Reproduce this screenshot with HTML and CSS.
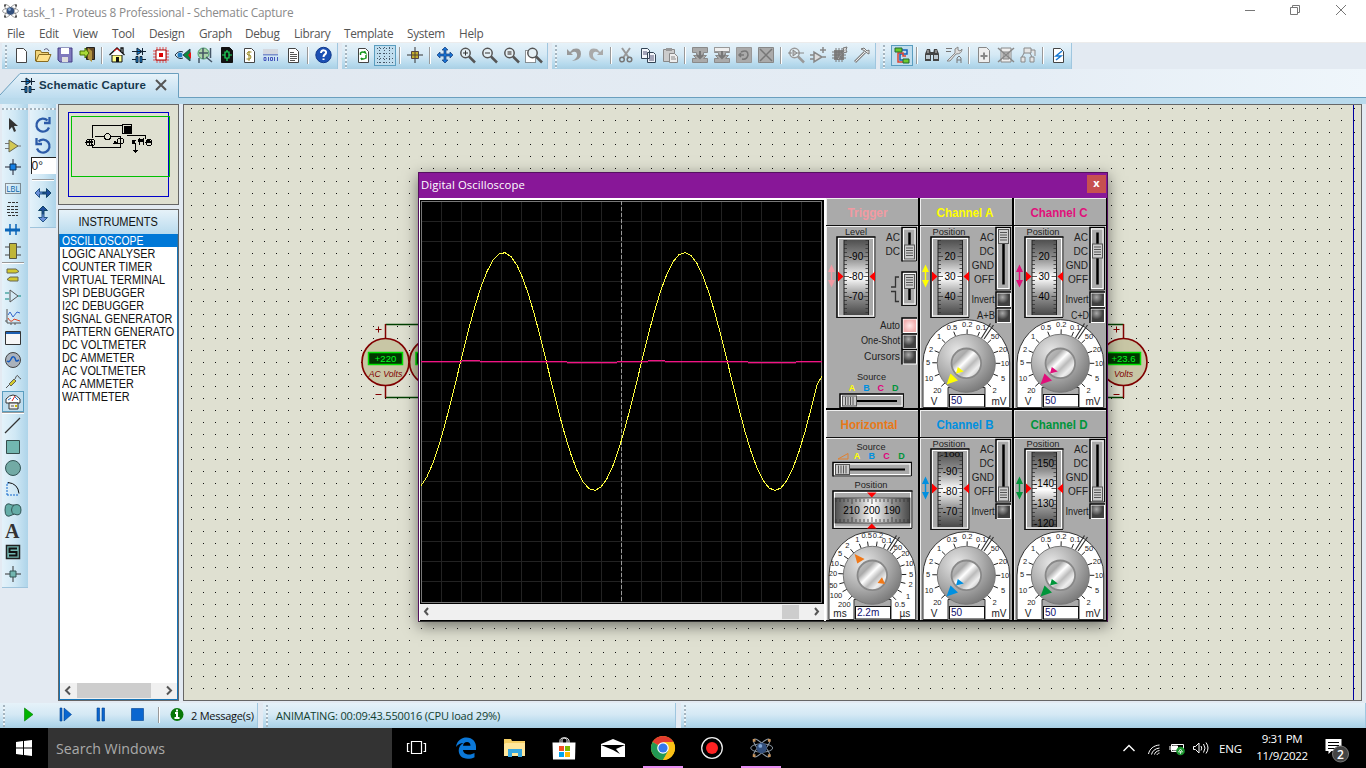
FILE: index.html
```html
<!DOCTYPE html>
<html lang="en">
<head>
<meta charset="utf-8">
<title>task_1 - Proteus 8 Professional - Schematic Capture</title>
<link rel="stylesheet" href="styles.css">
</head>
<body>
<div class="app">
  <header class="titlebar">
    <span class="ico" data-icon="atom"></span>
    <span class="caption">task_1 - Proteus 8 Professional - Schematic Capture</span>
    <svg class="winbtns" width="124" height="22" viewBox="0 0 124 22"><g fill="none" stroke="#777"><path d="M10 10.500h10M55.500 7.500h7v7h-7zM57.500 7v-1.500h7v7h-2M101 5l10 10M111 5l-10 10"/></g></svg>
  </header>
  <nav class="menu"><span>File</span><span>Edit</span><span>View</span><span>Tool</span><span>Design</span><span>Graph</span><span>Debug</span><span>Library</span><span>Template</span><span>System</span><span>Help</span></nav>
  <div class="toolbars">
    <div class="bar" data-icons="new open save exit | home parts chip eye zoomchip pcb bill code doc | help"></div>
    <div class="bar" data-icons="refresh *grid | origin | pan zoomin zoomout zoomall zoomarea"></div>
    <div class="bar" data-icons="undo redo | cut copy paste | blkcopy blkmove blkrot blkdel | pick makedev package hammer"></div>
    <div class="bar" data-icons="*wires | find props | addsheet delsheet tree | erc"></div>
  </div>
  <div class="tabs">
    <svg class="tabshape" width="180" height="25" viewBox="0 0 180 25"><defs><linearGradient id="tabg" x2="0" y2="1"><stop stop-color="#e8f3fa"/><stop offset="1" stop-color="#bcdcef"/></linearGradient></defs><path d="M0 22L20 .5h158.500V25H0z" fill="url(#tabg)"/><path d="M0 22L20 .5h158.500V24.500" fill="none" stroke="#6a9fbe"/></svg>
    <div class="tab"><span class="ico" data-icon="parts"></span><b>Schematic Capture</b><svg width="12" height="12"><path d="M1 1l10 10M11 1L1 11" stroke="#555" stroke-width="2"/></svg></div>
  </div>
  <main class="work">
    <aside class="tools"><div class="vbar" data-icons="arrow gate junction label script bus chipy | term pin graph window wave probe *meter | line square circle arc path text symbol marker"></div></aside>
    <aside class="rot"><div class="vbar short"><span class="ico" data-icon="cw"></span><span class="ico" data-icon="ccw"></span><span class="angle">0°</span><hr><span class="ico" data-icon="hflip"></span><span class="ico" data-icon="vflip"></span></div></aside>
    <section class="side">
      <div class="preview"><svg width="119" height="99" viewBox="59 105 119 99" shape-rendering="crispEdges"><path d="M68.500 112.500h100v84h-100z" fill="none" stroke="#0000c8"/><path d="M71.500 116.500h98v60h-98z" fill="none" stroke="#00c000"/><g fill="none" stroke="#000"><path d="M92.500 138v-12.500h30M92.500 144v3.500h28v-12M95 136.500h10M111 136.500h9M127 135.500h18v3M132 140.500h4M146 140.500h4M135.500 143v7"/><circle cx="89" cy="142.500" r="3"/><circle cx="92" cy="142.500" r="3"/><circle cx="107.500" cy="136.500" r="3"/><circle cx="120.500" cy="141" r="3"/><circle cx="149" cy="142.500" r="3"/><path d="M122.500 124.500h9v9h-9zM139.500 138v7M143.500 138v7"/></g><path d="M124 126h7v7h-7zM86 141h7v2h-7zM115 140l-2 4h5zM132 141h3v3h-3zM138 139h6v3h-6zM133 150h5l-2.500 3zM146 141h5v2h-5z"/></svg></div>
      <div class="instr"><div class="ihead"><span>INSTRUMENTS</span></div>
        <ul><li class="sel"><span>OSCILLOSCOPE</span></li><li><span>LOGIC ANALYSER</span></li><li><span>COUNTER TIMER</span></li><li><span>VIRTUAL TERMINAL</span></li><li><span>SPI DEBUGGER</span></li><li><span>I2C DEBUGGER</span></li><li><span>SIGNAL GENERATOR</span></li><li><span>PATTERN GENERATO</span></li><li><span>DC VOLTMETER</span></li><li><span>DC AMMETER</span></li><li><span>AC VOLTMETER</span></li><li><span>AC AMMETER</span></li><li><span>WATTMETER</span></li></ul>
        <div class="hscroll"><svg width="16" height="15"><path d="M10 3.500L6 7.500l4 4" class="chev"/></svg><i></i><svg width="16" height="15"><path d="M6 3.500l4 4-4 4" class="chev"/></svg></div>
      </div>
    </section>
    <section class="sheet"><svg id="sheet" width="1178" height="595" viewBox="184 105 1178 595"></svg>
      <div class="scope">
        <div class="scopebar"><span>Digital Oscilloscope</span><button>x</button></div>
        <div class="scopebody">
          <div class="display"><svg id="trace" width="403" height="404" viewBox="420 200 403 404"></svg>
            <div class="dscroll"><svg width="14" height="15"><path d="M8 4L5 7.500 8 11" class="chev"/></svg><i></i><svg width="14" height="15"><path d="M5 4l3 3.500L5 11" class="chev"/></svg></div></div>
          <div class="panels" id="panels"></div>
        </div>
      </div>
    </section>
  </main>
  <footer class="status">
    <div class="sbar s1"><svg width="170" height="24" viewBox="12 703 170 24"><path d="M24.500 708v13l8.500-6.500z" fill="#00b400" stroke="#007b00" stroke-width=".6"/><g fill="#0a66d0" stroke="#003f8f" stroke-width=".6"><path d="M60 708h2v13h-2zM64 708v13l7.500-6.500zM97 708h2.500v13H97zM102 708h2.500v13H102zM131.500 708.500h12v12h-12z"/></g><path d="M158.500 707v16" stroke="#999"/><path d="M159.500 707v16" stroke="#fff"/><circle cx="177" cy="714.500" r="6.500" fill="#087808"/><path d="M177 709.500v2M175 713h2v5M174.500 718h5" stroke="#fff" stroke-width="2" fill="none"/></svg><span class="msg">2 Message(s)</span></div>
    <div class="sbar s2"><span class="anim">ANIMATING: 00:09:43.550016 (CPU load 29%)</span></div>
    <div class="sbar s3"></div>
  </footer>
  <footer class="taskbar">
    <div class="start"><svg width="16" height="16"><path d="M0 2l7-1v6.500H0zM8 .9L16 0v7.500H8zM0 8.500h7V15l-7-1zM8 8.500h8V16l-8-1z" fill="#fff"/></svg></div>
    <div class="search">Search Windows</div>
    <div class="tb"><svg width="22" height="16"><path d="M5.500 1.500h10v12h-10zM3.500 3.500h-2v8h2M17.500 3.500h2v8h-2" fill="none" stroke="#fff" stroke-width="1.200"/></svg></div>
    <div class="tb"><svg width="22" height="22"><path d="M1 10C2 3 7 .5 11.500.5c6 0 9.500 4.500 9.500 9V13H8c.2 3 3 4.500 6 4.500 2.200 0 4-.6 5.500-1.500v4.300c-2 1-4.200 1.500-6.800 1.500-5.500 0-9-3.300-9-8.200 0-3.200 1.800-6 5-7.500C5.500 6.300 3 7.500 1 10zM8 8.800h7.500C15.500 6.500 14.200 5 12 5 9.700 5 8.300 6.600 8 8.800z" fill="#0b78d8"/></svg></div>
    <div class="tb"><svg width="22" height="20"><path d="M0 1h7l1 2h13v15H0z" fill="#f5cf65"/><path d="M2 5h19v13H0V6z" fill="#ffe79b"/><path d="M4 11h14v8h-4v-4H8v4H4z" fill="#36a7e0"/></svg></div>
    <div class="tb"><svg width="24" height="24"><path d="M8 7V4.500C8 1 15 1 15 4.500V7M10 7V4c0-3 7-3 7 1v2" fill="none" stroke="#fff"/><path d="M.5 6.500h23l-.5 17H1z" fill="#fff"/><path fill="#f25022" d="M7 10h5v5H7z"/><path fill="#7fba00" d="M13 10h5v5h-5z"/><path fill="#00a4ef" d="M7 16h5v5H7z"/><path fill="#ffb900" d="M13 16h5v5h-5z"/></svg></div>
    <div class="tb"><svg width="24" height="20"><path d="M0 6L12 1l12 5v13H0z" fill="#fff"/><path d="M0 7h24l-9 4 4 5-7-4z"/></svg></div>
    <div class="tb on"><svg width="24" height="24"><circle cx="12" cy="12" r="12" fill="#fbc116"/><path d="M12 12L1.600 6A12 12 0 0 1 22.400 6z" fill="#e33b2e"/><path d="M12 12L1.600 6A12 12 0 0 0 12 24l5-9z" fill="#229954"/><path d="M12 6h10.400A12 12 0 0 1 12 24l5.500-9z" fill="#fbc116"/><circle cx="12" cy="12" r="5.800" fill="#fff"/><circle cx="12" cy="12" r="4.600" fill="#3478eb"/></svg></div>
    <div class="tb"><svg width="24" height="24"><circle cx="12" cy="12" r="10.300" fill="#000" stroke="#eee" stroke-width="1.300"/><circle cx="12" cy="12" r="6" fill="#f22"/></svg></div>
    <div class="tb on"><span class="ico big" data-icon="atom2"></span></div>
    <div class="tray">
      <svg width="92" height="24" viewBox="1122 736 92 24" fill="none" stroke="#fff"><path d="M1123.500 751l5.500-5.500 5.500 5.500" stroke-width="1.400"/><path d="M1148.500 754c1-5 5-8.500 11-9M1151.500 754.500c.8-3.500 3.500-6 8-6.500M1154.500 754.500c.5-2 2-3.500 5-4M1157 755c.3-1 1-1.800 2.500-2" /><path d="M1171.500 744.500h12v7h-12z"/><path d="M1172.500 746h5v4h-5z" fill="#fff"/><path d="M1170 746v4"/><circle cx="1180.500" cy="751" r="4.300" fill="#1a962d" stroke="none"/><path d="M1180.500 749l-2 3h4zM1180.500 751v3" stroke-width=".7"/><path d="M1193.500 746.500h2l3.500-3.500v10l-3.500-3.500h-2zM1201 746q1.500 2 0 4.500M1203.500 744q3 4 0 8.500M1206 742.500q4 5.500 0 11"/></svg>
      <span class="eng">ENG</span>
      <span class="clock">9:31 PM<br>11/9/2022</span>
      <svg width="28" height="28" viewBox="1322 736 28 28"><path d="M1325.500 741h16v12h-10l-3 3v-3h-3z" fill="#fff"/><path d="M1328 744.500h11M1328 747.500h11M1328 750.500h11" stroke="#000"/><circle cx="1340.500" cy="756" r="8" fill="#444" stroke="#777"/><text x="1337" y="760.500" fill="#fff" font-size="12" font-weight="600">2</text></svg>
    </div>
  </footer>
</div>
<script src="script.js"></script>
</body>
</html>
```
FILE: styles.css
```css
*{box-sizing:border-box}
body{margin:0;font-family:"Open Sans","Noto Sans",sans-serif;font-size:12px;overflow:hidden}
svg{display:block;flex:none;overflow:visible}
.app{width:1366px;height:768px;display:flex;flex-direction:column;background:#e3eaf2}
.titlebar{height:23px;background:#fff;display:flex;align-items:center;padding-bottom:1px;color:#8a8a8a}
.titlebar .ico{width:20px}
.caption{letter-spacing:-.21px;font-size:11.800px;margin:0 auto 0 3px;white-space:nowrap;padding-top:1px}
.winbtns{margin-right:7px}
.menu{height:19px;background:#fff;padding-left:7px;display:grid;grid-template-columns:32px 34px 39px 37px 50px 46px 49px 50px 63px 52px 30px;line-height:20px;color:#555;font-size:11.800px;letter-spacing:-.3px}
.toolbars{height:27px;display:flex;gap:4px;border-top:1px solid #ececec;padding-left:2px}
.bar{display:flex;align-items:center;padding-left:8px;padding-bottom:2px;height:26px;background:linear-gradient(#e6f2f9,#d5e9f5 45%,#b3d8ec 85%,#aacfe3);border-right:1px solid #9fc6df;position:relative}
.bar:nth-child(1){width:336px}.bar:nth-child(2){width:206px;padding-left:10px}.bar:nth-child(3){width:324px;padding-left:11px}.bar:nth-child(4){width:192px;padding-left:11px}
.bar::before,.sbar::before{content:"";position:absolute;left:3px;top:2px;bottom:1px;width:2px;background:repeating-linear-gradient(#a4b4bf 0 2px,#eef6fa 2px 4px)}
.ico{display:flex;width:22px;height:21px;align-items:center;justify-content:center;flex:none}
.ico.on{border:1px solid #5a9dbf;background:#bfddee}
.sep{width:8px;height:17px;flex:none;display:flex;justify-content:center}
.sep::after{content:"";width:2px;background:linear-gradient(90deg,#999 50%,#fff 50%)}
.tabs{height:35px;border-bottom:6px solid #b9daec;box-shadow:inset 0 -1px #6a9fbe;position:relative;background:linear-gradient(90deg,#e0e7ef,#e5edf5 75%,#eff6fb)}
.tabshape{position:absolute;left:0;top:4px}
.tab{position:relative;display:flex;align-items:center;padding:3px 0 0 17px;color:#17384e;font-size:11.500px;height:29px}
.tab b{font-family:"Liberation Sans",sans-serif;width:107px;margin-right:9px;white-space:nowrap;letter-spacing:.17px}
.work{height:597px;display:flex;background:#e3eaf2}
.tools{width:30px;padding-left:2px}
.rot{width:28px}
.vbar{width:26px;height:484px;background:linear-gradient(90deg,#e4f2fa,#d0e8f5 50%,#aed4e9);padding-top:10px;border-bottom:1px solid #9fc4dc;display:flex;flex-direction:column;align-items:center;position:relative}
.tools .vbar{padding-right:4px}
.vbar::before{content:"";position:absolute;top:4px;left:0;right:0;height:2px;background:repeating-linear-gradient(90deg,#a4b4bf 0 2px,#eef6fa 2px 4px)}
.vbar .ico{height:21.100px}
.vbar .sep,.vbar hr{width:22px;height:3px;flex:none;border:0;margin:0;background:linear-gradient(#999 33%,#fff 33% 66%,transparent 66%)}
.vbar .sep::after{display:none}
.short{height:124px}
.short .ico{height:21px}
.angle{width:25px;height:17px;margin:1px 0 5px;background:#fff;border:solid #222;border-width:1px 0 0 1px;font:12px/16px "Liberation Sans",sans-serif;color:#222}
.side{width:125px;display:flex;flex-direction:column;gap:4px}
.preview{width:121px;height:101px;border:1px solid #666;background:#dfe0d1}
.instr{width:121px;height:492px;border:1px solid #666;background:#fff;display:flex;flex-direction:column}
.ihead{height:24px;background:linear-gradient(#e6f2f9,#b9dbee);text-align:center;line-height:24px}
.ihead,.instr ul{font-family:"Liberation Sans",sans-serif;font-size:12.500px;color:#111}
.ihead span{display:inline-block;transform:scaleX(.88)}
.instr ul{list-style:none;margin:0;padding:0;flex:1;border:solid #1673b5;border-width:0 1px}
.instr li{height:13px;line-height:14px;padding-left:2px;white-space:nowrap;overflow:hidden}
.instr li span{display:inline-block;transform:scaleX(.87);transform-origin:0 0}
.instr .sel{background:#0078d7;color:#fff}
.instr .sel span{transform:scaleX(.83)}
.hscroll,.dscroll{display:flex;background:#f0f0f0}
.hscroll{height:17px;border:solid #1673b5;border-width:0 1px 1px;justify-content:space-between}
.hscroll i{width:74px;height:15px;background:#cdcdcd;margin-right:10px}
.chev{fill:none;stroke:#555;stroke-width:2}
.sheet{width:1179px;height:597px;border:1px solid #666;background:#dfe0d1;position:relative}
.scope{position:absolute;left:234px;top:67px;width:690px;height:450px;border:1px solid #54105f;border-bottom-color:#333;background:#a9a9a9;box-shadow:0 4px 14px rgba(0,0,0,.5);display:flex;flex-direction:column}
.scopebar{height:25px;flex:none;background:#881798;color:#fff;display:flex;justify-content:space-between;padding:0 1px 0 2px;line-height:24px;font-size:11.300px;letter-spacing:.1px}
.scopebar button{width:19px;height:18px;margin-top:2px;background:#c75050;border:0;color:#fff;font:bold 11px/14px "Open Sans",sans-serif;padding:0 0 3px}
.scopebody{display:flex;height:423px;background:#000}
.display{width:407px;border:1px solid #fff;border-width:2px 2px 0 1px;background:#000;display:flex;flex-direction:column}
.dscroll{height:16px;width:404px}
.dscroll i{width:17px;height:14px;background:#cdcdcd;margin:1px 11px 0 auto}
.panels{display:grid;grid-template-columns:94px 94px 93px;grid-template-rows:212px 211px;background:#000}
.panel{background:#aaa;border:solid #000;border-width:0 2px 2px 0;box-shadow:inset 1px 1px #eee;overflow:hidden}
.panel:nth-child(3n){border-right-width:1px}
.panel:nth-child(n+4){border-bottom-width:1px}
.panels text{font-family:"Liberation Sans",sans-serif}
.status{height:27px;padding-top:2px;display:flex;gap:5px}
.sbar{height:25px;background:linear-gradient(#e6f2f9,#d5e9f5 45%,#b3d8ec 85%,#aacfe3);position:relative;border-right:1px solid #9fc6df;display:flex;align-items:center;white-space:nowrap;color:#111;padding-bottom:1px}
.s1{width:258px;padding-left:12px}.s2{width:413px;padding-left:13px}.s3{flex:1}
.msg{margin-left:9px;font-size:11px;letter-spacing:-.25px}
.anim{font-size:11px;color:#12402f;letter-spacing:-.17px}
.taskbar{height:40px;background:#000;display:flex;color:#fff}
.start{width:48px;display:flex;align-items:center;justify-content:center}
.search{width:344px;background:#333;color:#aaa;font-size:14.200px;line-height:41px;padding-left:8px}
.tb{width:49.200px;display:flex;align-items:center;justify-content:center}
.on.tb{box-shadow:inset 0 -2px #e58cf0;margin:0 4.600px;width:40px}
.tray{margin-left:auto;display:flex;align-items:center;padding-right:16px;white-space:nowrap}
.eng{margin:0 10px 0 5px;font-size:11.500px;width:25px;letter-spacing:-.2px}
.clock{font-size:11.500px;line-height:17.500px;text-align:center;width:56px;margin-right:12px;letter-spacing:-.35px;padding-bottom:2px}
```
FILE: script.js
```js
const page = () => `<path d="M3.500 1.500h7l3 3v11h-10z" fill="#fff" stroke="#444"/>`;
const lens = (g, c = '#555') => `<circle cx="6.500" cy="6" r="4.700" fill="#e5f0f5" stroke="${c}" stroke-width="1.500"/><path d="M10 9.500l6 6" stroke="${c}" stroke-width="2.500"/>${g}`;
const atom = (c, t) => `<g fill="none" stroke="${c}" stroke-width=".7"><ellipse cx="8.500" cy="8" rx="8" ry="3"/><ellipse cx="8.500" cy="8" rx="8.500" ry="2.500" transform="rotate(48 8.500 8)"/><ellipse cx="8.500" cy="8" rx="8.500" ry="2.500" transform="rotate(-48 8.500 8)"/></g><circle cx="8.500" cy="8" r="3.800" fill="#334f7c"/><circle cx="7.500" cy="6.500" r="1.400" fill="#7fa5d5"/><path d="M2 1.500h2v2H2zM13 1.500h2v2h-2zM2 12.500h2v2H2zM13 12.500h2v2h-2z" fill="${t}"/>`;
const blk = x => `<path d="M.5.500h15v5h-4v3h3l-3 3h4v4H.5v-4h4l-3-3h3v-3h-4z" fill="#aaa" stroke="#8a8a8a"/>${x}<path d="M8 4v6M5 8l3 3 3-3" fill="none" stroke="#777" stroke-width="2"/>`;
const icons = {
  atom: atom('#777', '#555'), atom2: atom('#8f9ba8', '#c7935b'),
  new: page(), open: '<path d="M.5 14V3.500h5l1 2h7v3" fill="#f1d47a" stroke="#886b20"/><path d="M1 14.500l3-7h12l-3 7z" fill="#ffe28a" stroke="#886b20"/><path d="M9 3q3-3 5 1" fill="none" stroke="#557"/>',
  save: '<path d="M1 1h14v14H3l-2-2z" fill="#8079bd" stroke="#453f86"/><path d="M4 1h8v6H4z" fill="#fff"/><path d="M5 10h6v5H5z" fill="#ddd"/>',
  exit: '<path d="M7.500.5h8v12h-8z" fill="#654a24" stroke="#222"/><path d="M9 1l4 3v11l-4-3z" fill="#b0923f"/><path d="M1 6h5V3l4 5-4 5v-3H1z" fill="#a9d836" stroke="#467000" transform="translate(0 -2)"/>',
  home: '<path d="M3 8h10v7H3z" fill="#ffff8a" stroke="#111"/><path d="M8 2l6 6H2z" fill="#fff"/><path d="M.5 8L8 1l7.500 7M12 4V1h2v5" fill="none" stroke="#111" stroke-width="1.300"/><path d="M5 4L8 1.500 11 4" fill="none" stroke="#e00"/><path d="M7 10h3v5H7z" fill="#111"/>',
  parts: '<g stroke="#123" fill="#1683db"><path d="M1 4.500h14M6 1v7l5-3.500zM11.500 1v7M1 12.500h4M11 12.500h4" /><path d="M5 9.500h2v6H5zM9 9.500h2v6H9z"/></g>',
  chip: '<path d="M0 4h16M0 7h16M0 10h16M0 13h16M4 0v16M7 0v16M10 0v16M13 0v16" stroke="#d55"/><path d="M3 3h10v10H3z" fill="#fff" stroke="#a00"/><path d="M6 6h4v4H6z" fill="#d00"/>',
  eye: '<path d="M15 2v12L8 8z" fill="#0b8a3c" stroke="#345"/><path d="M13 8l3-3v7z" fill="#e11"/><path d="M0 8q4-5 8-3M0 8q4 5 8 3" fill="none" stroke="#234"/><circle cx="5" cy="8" r="2.500" fill="#257fc2"/>',
  zoomchip: '<circle cx="6.500" cy="6.500" r="5.500" fill="#acd4aa" stroke="#496"/><path d="M2 6h9M6 1v11M13.500 1v10M2 11v5M9 10l6 5" stroke="#456" stroke-width="1.500"/>',
  pcb: '<path d="M2.500.5h8l3 3v12h-11z" fill="#111" stroke="#111"/><path d="M3 8h3V5h4v6H6V8M10 8h3M8 3v2M8 11v3" fill="none" stroke="#1fe060" stroke-width="1.200"/>',
  bill: page() + '<path d="M10.500 5H7q-2 2 0 3h2q2 2 0 4H5.500M8 4v10" fill="none" stroke="#9a8a20"/>',
  code: '<path d="M0 2h15v5H0z" fill="#d4d8df"/><path d="M0 7h15v1.500H0z" fill="#7a8fcb"/><path d="M1 10.500h2v3H1zM5.500 10v4M7.500 10.500h2v3h-2zM11.500 10v4M14.500 10v4" stroke="#45b" fill="none"/>',
  doc: page() + '<path d="M5 5.500h4M5 7.500h7M5 9.500h7M5 11.500h7M5 13.500h5" stroke="#555"/>',
  help: '<circle cx="8.500" cy="8" r="7.700" fill="#1c50b4" stroke="#123b8c"/><path d="M6 6c0-4 6-3 5 0-.3 1.500-2.500 1.500-2.500 4M8.500 11.500V13" fill="none" stroke="#fff" stroke-width="2"/>',
  refresh: page() + '<path d="M5.500 8V6q2-2 5 0l-1-2M11 8v3q-3 2-5 0l1 2" fill="none" stroke="#14951c" stroke-width="1.500"/>',
  grid: '<path d="M0 1.500h16M0 6.500h16M0 11.500h16M0 15.500h16M2.500 0v16M7.500 0v16M12.500 0v16" stroke="#456" stroke-dasharray="1 2"/>',
  origin: '<path d="M0 8h16M8 0v16" stroke="#333"/><path d="M4.500 4.500h7v7h-7z" fill="#c2ad2f" stroke="#544"/><path d="M5 8h6M8 5v6" stroke="#543"/>',
  pan: '<path d="M8 0l3 3H9v4h4V5l3 3-3 3V9H9v4h2l-3 3-3-3h2V9H3v2L0 8l3-3v2h4V3H5z" fill="#1873d3" stroke="#153a78" stroke-width=".7"/>',
  zoomin: lens('<path d="M4 6h5M6.500 3.500v5" stroke="#333"/>'), zoomout: lens('<path d="M4 6h5" stroke="#333"/>'), zoomall: lens('<path d="M4.500 4h4v4h-4z" fill="#888"/>'),
  zoomarea: '<path d="M.5 3.500h10v12H.5z" fill="#fff" stroke="#333" stroke-dasharray="1 1"/>' + '<g transform="translate(1 0)">' + lens('') + '</g>',
  undo: '<path d="M1 2v6h6L5 6q5-3 6 1 1 4-5 7 9-1 9-7 0-7-8-5L4 5z" fill="#999"/>', redo: '<path transform="matrix(-1 0 0 1 16 0)" d="M1 2v6h6L5 6q5-3 6 1 1 4-5 7 9-1 9-7 0-7-8-5L4 5z" fill="#aaa"/>',
  cut: '<path d="M4 1l7 10M12 1L5 11" stroke="#999" stroke-width="2"/><g fill="none" stroke="#777" stroke-width="1.500"><circle cx="4" cy="12.500" r="2.300"/><circle cx="11.500" cy="12.500" r="2.300"/></g>',
  copy: '<path d="M1.500 1.500h6l2 2v8h-8zM7.500 5.500h6l2 2v8h-8z" fill="#f3f6fb" stroke="#345"/><path d="M3 5h4M3 7h4M9 9h5M9 11h5M9 13h5" stroke="#557"/>',
  paste: '<path d="M1.500 2.500h11v12h-11z" fill="#ccc" stroke="#888"/><path d="M4 1h6v3H4z" fill="#999"/><path d="M7.500 6.500h5l3 3v6h-8z" fill="#eee" stroke="#888"/><path d="M9 10h4M9 12h5" stroke="#888"/>',
  blkcopy: blk(''), blkmove: blk('<path d="M.5.500h15v4H.5z" fill="#eee" stroke="#999"/>'),
  blkrot: '<path d="M.5.500h15v15H.5z" fill="#aaa" stroke="#999"/><path d="M3 8h5M5 6l-2 2 2 2M5 5q7-3 7 3-1 5-6 4" fill="none" stroke="#777" stroke-width="1.500"/>',
  blkdel: '<path d="M.5.500h15v15H.5z" fill="#aaa" stroke="#888"/><path d="M2 2l12 12M14 2L2 14" stroke="#777" stroke-width="1.500"/>',
  pick: lens('<path d="M0 6h4M5 3v6l4-3zM9 6h7" stroke="#888" fill="#bbb"/>', '#999'),
  makedev: '<path d="M4 5v10l8-5zM0 8h4M0 12h4M12 10h4M10 3h6M13 0v6" stroke="#888" stroke-width="1.500" fill="#ddd"/>',
  package: '<path d="M2 3h10v10H2z" fill="#888"/><path d="M0 5h14M0 8h14M0 11h14M4 1v14M7 1v14M10 1v14" stroke="#777"/><path d="M5 12l7-8-1-3 4-1-1 3 1 2-4 1-5 7z" fill="#ddd" stroke="#777"/>',
  hammer: '<path d="M1 15L11 5" stroke="#888" stroke-width="3"/><path d="M1.500 14.500L11 5" stroke="#eee"/><path d="M7 2l3-1 3 3 2-1v4l-2-1-2-2z" fill="#eee" stroke="#777"/>',
  wires: '<path d="M7 3h6v4H6v6h4" fill="none" stroke="#1560b8" stroke-width="1.500"/><path d="M12 9H9V6H4v9h5" fill="none" stroke="#d43" stroke-width="1.500"/><path d="M1 1h7v4H1zM9 12h6v4H9z" fill="#6dca2b" stroke="#263"/>',
  find: '<path d="M3 2h3l1 5v7H1V7zM10 2h3l2 5v7H9V7zM6 5h4v3H6z" fill="#444"/><path d="M2 8h4v4H2zM10 8h4v4h-4z" fill="#bcc8d0"/><path d="M4 3v3M12 3v3" stroke="#ccc"/>',
  props: '<path d="M0 1.500h6M0 4.500h5" stroke="#777"/><path d="M1 14l8-8V2l3-2v3l2 1 2-2q0 5-6 5l-6 7z" fill="#ddd" stroke="#888"/><path d="M11 16v-5l2-2 2 2v5M11 13h4" fill="none" stroke="#777"/>',
  addsheet: '<path d="M2.500.5h8l3 3v12h-11z" fill="#eee" stroke="#888"/><path d="M4.500 9h7M8 5.500v7" stroke="#888" stroke-width="2"/>',
  delsheet: '<path d="M3 1h10v14H3z" fill="#eee" stroke="#888"/><path d="M5 5h6v7H5z" fill="#bbb" stroke="#888"/><path d="M0 1l16 14M16 1L0 15" stroke="#888" stroke-width="1.500"/>',
  tree: '<path d="M4 1h7v5H4zM1 10h4v5H1zM10 10h4v5h-4zM4 6l-2 4M10 6l2 4M11 3h4v6" fill="#e5e5e5" stroke="#888"/>',
  erc: page() + '<path d="M12 4L6 9h5l-5 4" fill="none" stroke="#1678d2" stroke-width="1.500"/>',
  arrow: '<path d="M4 1v12l3-3 2 5 2-1-2-5h4z" fill="#333"/>', gate: '<path d="M0 5.500h4M0 10.500h4M12 8h4" stroke="#777"/><path d="M4 2v12l9-6z" fill="#d3c954" stroke="#665"/>',
  junction: '<path d="M0 8h16M8 0v16" stroke="#223"/><path d="M5 5h6v6H5z" fill="#1580e5" stroke="#135"/>',
  label: '<path d="M.5 3.500h15v10H.5z" fill="none" stroke="#333" stroke-dasharray="1 1"/><text x="1.500" y="12" font-family="Liberation Sans" font-size="9.500" textLength="13" lengthAdjust="spacingAndGlyphs" fill="#0a64a8">LBL</text>',
  script: '<path d="M3 1.500h10M2 5.500h12M2 8.500h12M2 11.500h12M3 14.500h10" stroke="#333" stroke-dasharray="3 1"/>',
  bus: '<path d="M0 8h15" stroke="#0964b8" stroke-width="3"/><path d="M5 2v11M11 2v11" stroke="#0964b8" stroke-width="1.500"/>',
  chipy: '<path d="M0 4h16M0 12h16" stroke="#444"/><path d="M4.500.5h7v15h-7z" fill="#bfb538" stroke="#554"/>',
  term: '<path d="M2 2h9l3 2.500L11 6H2zM13 10H5l-3 2.500L5 14h8z" fill="#d3c92f" stroke="#665"/>', pin: '<path d="M0 5h4M0 11h4M13 8h3" stroke="#08857b"/><path d="M5 2v12l8-6z" fill="none" stroke="#555"/>',
  graph: '<path d="M2 0v14h14M0 12h2M6 14v2M10 14v2" stroke="#555" fill="none"/><path d="M3 6l2-3 3 5 4-5 3 1" fill="none" stroke="#36c"/><path d="M3 9q3 6 6 1l6 2" fill="none" stroke="#d42"/>',
  window: '<path d="M.5 1.500h15v13H.5z" fill="#f6f6f6" stroke="#333"/><path d="M1 2h14v2H1z" fill="#1d5fb0"/>', wave: '<circle cx="8" cy="8" r="7.500" fill="#aab2bc" stroke="#444"/><path d="M2 9c4 3 4-6 7-4s0 6 5 3" fill="none" stroke="#1559bc" stroke-width="1.500"/>',
  probe: '<path d="M1 15l4-4M10 6q2-5 3-3t3 3" fill="none" stroke="#555"/><path d="M4 11l5-5 2 2-5 5z" fill="#d3c92f" stroke="#665"/>',
  meter: '<path d="M1 5q7-8 14 0v4H1z" fill="#fff" stroke="#333"/><path d="M3 6l3-2M10 3l3 3" stroke="#27c"/><path d="M7 7l3-5" stroke="#d22"/><path d="M4 9h9v6H4z" fill="#eee" stroke="#333"/><path d="M6 12h3" stroke="#555"/><path d="M10 12h2" stroke="#cb0" stroke-width="2"/>',
  line: '<path d="M0 15L15 0" stroke="#333" stroke-width="1.300"/>', square: '<path d="M1.500 1.500h13v13h-13z" fill="#72b6b0" stroke="#354d4c"/>', circle: '<circle cx="8" cy="8" r="7.500" fill="#72aaa5" stroke="#355"/>',
  arc: '<path d="M2 14V2h2M2 14h12" stroke="#16c" fill="none" stroke-dasharray="2 1"/><path d="M3 1.500q10 1 11 11" stroke="#111" fill="none"/>', path: '<path d="M7 3q-7-4-7 5t7 5l2-1q7 3 7-4t-7-5z" fill="#65ada7" stroke="#355"/><path d="M9 3q-5 5 0 10" stroke="#355" fill="none"/>',
  text: '<text x="0" y="15" font-family="Liberation Serif" font-size="20" font-weight="bold" fill="#333">A</text>', symbol: '<path d="M1.500 1.500h13v13h-13z" fill="#72b6b0" stroke="#222" stroke-width="1.500"/><path d="M12 4.500H4.500V8h7v3.500H4" fill="none" stroke="#111" stroke-width="2"/>',
  marker: '<path d="M0 8h16M8 0v16" stroke="#333"/><path d="M5 5h6v6H5z" fill="#72b6b0" stroke="#355"/>',
  cw: '<path d="M12.500 3.500a6.500 6.500 0 1 0 1.500 7M14.500 0v6H9" fill="none" stroke="#2c5ba8" stroke-width="2.300"/>', ccw: '<path d="M3.500 3.500a6.500 6.500 0 1 1-1.500 7M1.500 0v6H7" fill="none" stroke="#2c5ba8" stroke-width="2.300"/>',
  hflip: '<path d="M0 8l4.500-4.500V7H8v2H4.500v3.500z" fill="#6b91da" stroke="#258"/><path d="M16 8l-4.500-4.500V7H8v2h3.500v3.500z" fill="#214f9c" stroke="#146"/>', vflip: '<path d="M8 0l4.500 4.500H9V8H7V4.500H3.500z" fill="#214f9c" stroke="#146"/><path d="M8 16l4.500-4.500H9V8H7v3.500H3.500z" fill="#6b91da" stroke="#258"/>'
};
const svg = (n, s = 16) => `<svg width="${s}" height="${s}" viewBox="0 0 16 16">${icons[n]}</svg>`;
document.querySelectorAll('[data-icons]').forEach(e => {
  e.innerHTML = e.dataset.icons.split(' ').map(n => n === '|' ? '<span class="sep"></span>' : `<span class="ico ${n[0] === '*' ? 'on' : ''}">${svg(n.replace('*', ''))}</span>`).join('');
});
document.querySelectorAll('[data-icon]').forEach(e => { e.innerHTML = svg(e.dataset.icon, e.classList.contains('big') ? 22 : 16); });

// Schematic sheet: grid dots and the two voltmeters
let dots = '';
for (let j = 0; j < 49; j++) for (let i = 0; i < 97; i++) dots += `M${Math.round(191 + 12.11 * i)} ${Math.round(108 + 12.09 * j)}h1v1h-1z`;
const volt = (x, v, l, d) => `<path d="M${x} 324.500h${d}M${x} 397.500h${d}" stroke="#004000" stroke-width="1.500"/><path d="M${x} 324v15M${x} 386v12" stroke="#800000" stroke-width="1.500"/><circle cx="${x}" cy="362" r="23.500" fill="#c8c6a5" stroke="#800000" stroke-width="1.700"/><rect x="${x - 17}" y="352.500" width="34" height="12" fill="#003800" stroke="#00e000" stroke-width="1.500"/><text x="${x}" y="362" text-anchor="middle" font-family="Liberation Sans" font-size="9.500" fill="#00ff20">${v}</text><text x="${x}" y="377" text-anchor="middle" font-family="Liberation Sans" font-style="italic" font-size="8.700" fill="#800000">${l}</text><path d="M${x - 10} 329.500h6M${x - 7} 326.500v6M${x - 10} 394.500h6" stroke="#800000"/>`;
document.getElementById('sheet').innerHTML = `<path d="${dots}" fill="#111"/><path d="M1353.500 105v595" stroke="#0000a0"/>` + volt(433, '', '', 0) + volt(385.5, '+220', 'AC Volts', 34) + volt(1123.5, '+23.6', 'Volts', -18);

// Oscilloscope trace
let grid = '', pts = '';
for (let i = 1; i < 20; i++) grid += `M${421.5 + 20 * i} 201v401M421 ${201.500 + 20 * i}h401`;
for (let x = 421; x <= 822; x += 6) pts += `${x},${(371.5 - 119 * Math.cos((x - 503.5) * Math.PI * 2 / 181)).toFixed(1)} `;
pts += '822,376';
const flat = [[421, 462, 361], [462, 480, 360], [480, 567, 361], [567, 617, 362], [617, 648, 361], [648, 665, 360], [665, 748, 361], [748, 796, 362], [796, 822, 361]];
document.getElementById('trace').innerHTML = `<rect x="420" y="200" width="403" height="404"/><g shape-rendering="crispEdges" fill="none"><path d="${grid}" stroke="#222"/><path d="M421.500 201.500h400v401h-400z" stroke="#777"/><path d="M621.500 201v401" stroke="#999" stroke-dasharray="4 2"/><polyline points="${pts}" stroke="#ffff40"/></g>` + flat.map(([a, b, y]) => `<rect x="${a}" y="${y}" width="${b - a}" height="1.350" fill="#f01484"/>`).join('');

// Front panel controls
const T = (x, y, s, o = {}) => `<text x="${x}" y="${y}" font-size="${o.s || 9.5}" fill="${o.c || '#222'}" text-anchor="${o.a || 'middle'}" ${o.b ? 'font-weight="bold"' : ''} ${o.w ? `textLength="${o.w}" lengthAdjust="spacingAndGlyphs"` : ''}>${s}</text>`;
const frame = (x, y, w, h, f = '#aaa') => `<rect x="${x}" y="${y}" width="${w}" height="${h}" fill="#fff"/><path d="M${x} ${y + h}V${y}h${w}" fill="none" stroke="#000" stroke-width="1.500"/><rect x="${x + 1.5}" y="${y + 1.500}" width="${w - 2.5}" height="${h - 2.500}" fill="${f}"/>`;
const head = (s, c, x = 45, w = 57) => T(x, 19, s, { s: 13, c, b: 1, w }) + '<path d="M0 27.500h92" stroke="#111"/><path d="M0 28.500h92" stroke="#eee"/>';
const box = (x, y, w, h) => frame(x, y, w, h) + `<path d="M${x + w - .5} ${y}v${h - .5}H${x}" fill="none" stroke="#111"/><rect x="${x + 1.500}" y="${y + 1.500}" width="${w - 3.500}" height="${h - 3.500}" fill="none" stroke="#fff"/>`;
const vslide = (y, h, t) => box(76, y, 15, h) + `<path d="M83.500 ${y + 5}v${h - 11}" stroke="#000" stroke-width="2.500"/><rect x="78.500" y="${t}" width="10" height="14" fill="#ccc" stroke="#555"/><path d="M80 ${t + 3}h7M80 ${t + 5.5}h7M80 ${t + 8}h7M80 ${t + 10.5}h7" stroke="#555"/>`;
const hslide = (x, y, w) => box(x, y, w, 14) + `<path d="M${x + 15} ${y + 7}h${w - 22}" stroke="#000" stroke-width="2"/><rect x="${x + 2.5}" y="${y + 2}" width="14" height="10" fill="#ccc" stroke="#555"/><path d="M${x + 5.5} ${y + 3}v8M${x + 8} ${y + 3}v8M${x + 10.5} ${y + 3}v8M${x + 13} ${y + 3}v8" stroke="#555"/>`;
const btn = (y, f = 'url(#bt)') => frame(76, y, 15, 15, f);
const ud = c => `<path d="M5.500 71v14" stroke="${c}" stroke-width="1.500"/><path d="M2 74l3.500-7.500L9 74zM2 82l3.500 7.500L9 82z" fill="${c}"/>`;
const drum = (v, off = 0, first = 0) => {
  let t = '';
  for (let y = -36; y <= 36; y += 4) t += `M18 ${78.5 + y}h${y % 20 ? 3 : 5}M42.500 ${78.5 + y}h${y % 20 ? -3 : -5}`;
  return box(11, 39, 38.500, 81) + `<rect x="18" y="42" width="25" height="75" fill="url(#dr)"/><path d="${t}" stroke="#333" stroke-width=".8"/><path d="M18 42v75M42.500 42v75" stroke="#222"/><g clip-path="url(#dc)">${v.map((s, i) => { const y = 81.5 + off + (i - 1 - first) * 20; return y < 50 ? T(30, 47, s, { c: '#000', s: 7, w: 20 }) : T(30, y, s, { c: '#000', s: 10 }); }).join('')}</g><path d="M12 73.500v10l5.500-5zM49 73.500v10l-5.500-5z" fill="#f00"/>`;
};
const dial = (labels, c, u1, u2, val, tri) => {
  let t = '', l = '';
  labels.forEach(([s, x, y]) => {
    const dx = x - 46.3, dy = y - 165.300, r = Math.hypot(dx, dy);
    t += `M${46.3 + dx / r * 29} ${165.300 + dy / r * 29}L${46.3 + dx / r * 34} ${165.300 + dy / r * 34}`;
    l += T(x, y + 2.6, s, { s: 7.5 });
  });
  return `<path d="M3 209.500V165a43.300 43.300 0 0 1 86.700 0v44.500H65v-20H28v20z" fill="#fff" stroke="#333"/><path d="${t}" stroke="#222"/><path d="M61.500 140L70.500 125.500M64 141L73.500 127" stroke="#333" stroke-width="1.200"/>${l}<circle cx="46.300" cy="165.300" r="29" fill="url(#kn)" stroke="#777"/><circle cx="46.300" cy="165.300" r="14.800" fill="url(#ki)" stroke="#888" stroke-width="1.800"/><path d="${tri}" fill="${c}"/>${T(14, 207, u1, { s: 10 })}${T(79, 207, u2, { s: 10 })}<rect x="29.500" y="196.500" width="35" height="12.500" fill="#fff" stroke="#111"/>${T(31, 206, val, { s: 10, c: '#101070', a: 'start' })}`;
};
const cl = [['20', 346, 582], ['10', 321, 547], ['5', 318, 500], ['2', 327, 460], ['1', 351, 422], ['0.5', 390, 394], ['0.2', 436, 384], ['0.1', 478, 395], ['50', 519, 420], ['20', 543, 460], ['10', 549, 502], ['5', 543, 546], ['2', 518, 583]].map(a => [a[0], a[1] / 3 - 98, a[2] / 3 - 2]);
const hl = [['200', 67, 588], ['100', 42, 562], ['50', 34, 532], ['20', 33, 496], ['10', 38, 466], ['5', 54, 436], ['2', 76, 412], ['1', 106, 393], ['0.5', 134, 382], ['0.2', 168, 382], ['0.1', 195, 396], ['50', 228, 418], ['20', 250, 436], ['10', 262, 466], ['5', 267, 499], ['2', 266, 530], ['1', 258, 564], ['0.5', 234, 588]].map(a => [a[0], a[1] / 3 - 4, a[2] / 3 - 2]);
const R = (x, y, s, w) => T(x, y, s, { a: 'end', s: 10, w });
const channel = (n, c, d, t, x) => head('Channel ' + n, c) + T(29, 36.500, 'Position', { w: 33 }) + ud(c) + drum(...d) + R(74, 43, 'AC') + R(74, 57, 'DC') + R(74, 71, 'GND') + R(74, 85, 'OFF') + vslide(29.500, 63, t) + R(74.500, 105, 'Invert', 23) + btn(94) + (x ? R(75, 121, x, 18) + btn(110) : '') + dial(cl, c, 'V', 'mV', '50', 'M26.500 186.500l4-11 7.500 7zM36 175.500l1.800-6.500 6 4.500z');
const abcd = (x, y, d) => ['#ffff00', '#0090e0', '#e0007c', '#00953a'].map((c, i) => T(x + d * i, y, 'ABCD'[i], { c, b: 1, s: 9 })).join('');
const trigger = head('Trigger', '#f29aa2', 41.5, 40) + T(30, 36.500, 'Level', { w: 22 }) + ud('#f29aa2') + drum(['-90', '-80', '-70']) + R(74, 43, 'AC') + R(74, 57, 'DC') + vslide(29.500, 34, 47) + '<path d="M65 89h4.500V79H73M65 93.500h4.500V103.500H73" fill="none" stroke="#333" stroke-width="1.300"/>' + vslide(74, 34, 76.500) + R(74, 131, 'Auto', 20) + R(74, 146, 'One-Shot', 39) + R(74, 162, 'Cursors', 36) + btn(120, 'url(#pk)') + btn(136) + btn(151.500) + T(45.500, 182, 'Source', { w: 29 }) + abcd(26, 193, 14.400) + hslide(14, 196, 64);
let ht = '';
for (let x = -36; x <= 36; x += 4) ht += `M${46 + x} 89v${x % 20 ? 3 : 5}M${46 + x} 112v${x % 20 ? -3 : -5}`;
const horiz = head('Horizontal', '#e87817', 43) + T(45, 40, 'Source', { w: 29 }) + '<path d="M12 49h10v-5.500z" fill="none" stroke="#e08030"/>' + abcd(31, 49, 14.800) + hslide(7, 52.500, 79) + T(45, 78, 'Position', { w: 33 }) + box(7, 81, 79.500, 38) + `<rect x="9" y="88" width="75" height="25" fill="url(#hr)" stroke="#222" stroke-width=".7"/><path d="${ht}" stroke="#333" stroke-width=".8"/>` + T(25.500, 103.500, '210', { s: 10, c: '#000' }) + T(45.700, 103.500, '200', { s: 10, c: '#000' }) + T(66, 103.500, '190', { s: 10, c: '#000' }) + '<path d="M41 82.500h9.500l-4.700 5zM41 118.500h9.500l-4.700-5z" fill="#f00"/>' + dial(hl, '#f07818', 'ms', 'µs', '2.2m', 'M28.600 144l10 5-7.300 4.500zM51.500 173l4.500-5.700 3 6.700z');
const defs = '<defs><linearGradient id="dr" x2="0" y2="1"><stop stop-color="#505050"/><stop offset=".25" stop-color="#929292"/><stop offset=".5" stop-color="#fff"/><stop offset=".75" stop-color="#929292"/><stop offset="1" stop-color="#484848"/></linearGradient><linearGradient id="hr"><stop stop-color="#505050"/><stop offset=".25" stop-color="#999"/><stop offset=".5" stop-color="#fff"/><stop offset=".75" stop-color="#999"/><stop offset="1" stop-color="#484848"/></linearGradient><radialGradient id="bt" cx=".4" cy=".3"><stop stop-color="#aaa"/><stop offset="1" stop-color="#404040"/></radialGradient><radialGradient id="pk"><stop stop-color="#ffe8e8"/><stop offset="1" stop-color="#f2b0b0"/></radialGradient><radialGradient id="kn" cx=".35" cy=".3" r=".8"><stop stop-color="#e8e8e8"/><stop offset=".55" stop-color="#aaa"/><stop offset="1" stop-color="#707070"/></radialGradient><linearGradient id="ki" x2="1" y2="1"><stop stop-color="#ccc"/><stop offset=".3" stop-color="#aaa"/><stop offset=".45" stop-color="#fff"/><stop offset=".6" stop-color="#bbb"/><stop offset=".75" stop-color="#eee"/><stop offset="1" stop-color="#aaa"/></linearGradient><clipPath id="dc"><path d="M18 42h25v75H18z"/></clipPath></defs>';
document.getElementById('panels').innerHTML = [defs + trigger, channel('A', '#ffff00', [['20', '30', '40']], 31.5, 'A+B'), channel('C', '#e0107a', [['20', '30', '40']], 46, 'C+D'), horiz, channel('B', '#0090e0', [['-100', '-90', '-80', '-70'], 3.5, 1], 77), channel('D', '#00953a', [['-150', '-140', '-130', '-120'], -4.5], 77)].map(s => `<div class="panel"><svg width="92" height="211" viewBox="0 0 92 211">${s}</svg></div>`).join('');
```
